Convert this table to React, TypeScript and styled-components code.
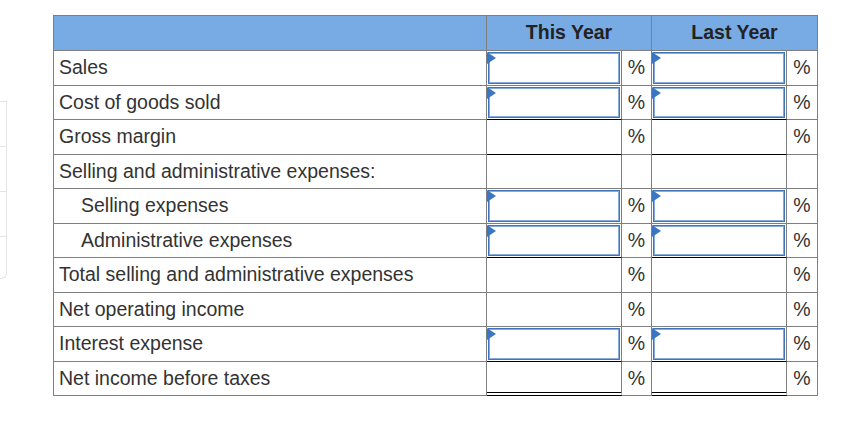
import styled, { createGlobalStyle } from "styled-components";

const GlobalStyle = createGlobalStyle`
  html, body {
    margin: 0;
    padding: 0;
    background: #ffffff;
  }
  body {
    font-family: "Liberation Sans", Arial, sans-serif;
  }
`;

type Underline = "none" | "single" | "double";

interface Row {
  label: string;
  indent?: boolean;
  input?: boolean;
  blank?: boolean;
  underline?: Underline;
}

const rows: Row[] = [
  { label: "Sales", input: true },
  { label: "Cost of goods sold", input: true, underline: "single" },
  { label: "Gross margin", underline: "single" },
  { label: "Selling and administrative expenses:", blank: true },
  { label: "Selling expenses", indent: true, input: true },
  { label: "Administrative expenses", indent: true, input: true, underline: "single" },
  { label: "Total selling and administrative expenses" },
  { label: "Net operating income" },
  { label: "Interest expense", input: true, underline: "single" },
  { label: "Net income before taxes", underline: "double" },
];

const Page = styled.div`
  display: flex;
  flex-flow: row nowrap;
  align-items: flex-start;
  padding-top: 15px;
  width: 867px;
  height: 428px;
`;

// the edge of a neighbouring panel that peeks in from the left
const PeekCard = styled.div`
  margin-top: 86px;
  width: 6px;
  display: flex;
  flex-flow: column nowrap;
  border: 1px solid #e4e4e4;
  border-left: none;
  border-bottom-right-radius: 6px;
`;

const PeekStrip = styled.div<{ $last?: boolean }>`
  height: ${({ $last }) => ($last ? "41px" : "44px")};
  border-bottom: ${({ $last }) => ($last ? "none" : "1px solid #e4e4e4")};
`;

const Grid = styled.div`
  margin-left: 46px;
  display: grid;
  grid-template-columns: 433px 135px 30px 135px 31px;
  grid-template-rows: 35px repeat(10, 34.5px);
  border-left: 1px solid #7f7f7f;
  border-top: 1px solid #7f7f7f;
`;

const HeadCell = styled.div<{ $span?: number }>`
  box-sizing: border-box;
  grid-column: span ${({ $span }) => $span ?? 1};
  background-color: #78abe4;
  border-right: 1px solid #7f7f7f;
  border-bottom: 1px solid #7f7f7f;
  display: flex;
  align-items: center;
  justify-content: center;
  padding-bottom: 1px;
  font-weight: 700;
  font-size: 19.5px;
  color: #222222;
`;

const LabelCell = styled.div<{ $indent?: boolean }>`
  box-sizing: border-box;
  border-right: 1px solid #7f7f7f;
  border-bottom: 1px solid #7f7f7f;
  display: flex;
  align-items: center;
  padding-left: ${({ $indent }) => ($indent ? "27px" : "5px")};
  font-size: 19.5px;
  color: #333333;
  white-space: nowrap;
`;

const AmountCell = styled.div<{ $underline: Underline }>`
  box-sizing: border-box;
  position: relative;
  border-right: 1px solid #7f7f7f;
  border-bottom: ${({ $underline }) =>
    $underline === "double"
      ? "4px double #000000"
      : $underline === "single"
      ? "1px solid #000000"
      : "1px solid #7f7f7f"};
  padding: 1px;
  display: flex;
`;

const AmountInput = styled.input`
  box-sizing: border-box;
  flex: 1;
  width: 100%;
  min-width: 0;
  margin: 0;
  border: 1px solid #3f74b8;
  box-shadow: inset 0 0 0 1px #86acdd;
  background: #ffffff;
  outline: none;
  font-family: "Liberation Sans", Arial, sans-serif;
  font-size: 16px;
  padding: 0 8px;
`;

// little blue flag in the corner of each entry field
const Flag = styled.span`
  display: block;
  position: absolute;
  left: 0;
  top: 1px;
  width: 0;
  height: 0;
  border-top: 6px solid transparent;
  border-bottom: 6px solid transparent;
  border-left: 9px solid #3a76c2;
  pointer-events: none;
`;

const PercentCell = styled.div`
  box-sizing: border-box;
  border-right: 1px solid #7f7f7f;
  border-bottom: 1px solid #7f7f7f;
  display: flex;
  align-items: center;
  justify-content: center;
  font-size: 19.5px;
  color: #333333;
`;

const EmptyCell = styled.div`
  box-sizing: border-box;
  border-right: 1px solid #7f7f7f;
  border-bottom: 1px solid #7f7f7f;
`;

const Amount = ({ row }: { row: Row }) => (
  <AmountCell $underline={row.underline ?? "none"}>
    {row.input && (
      <>
        <AmountInput type="text" aria-label={row.label} />
        <Flag />
      </>
    )}
  </AmountCell>
);

const App = () => {
  return (
    <>
      <GlobalStyle />
      <Page>
        <PeekCard>
          <PeekStrip />
          <PeekStrip />
          <PeekStrip />
          <PeekStrip $last />
        </PeekCard>
        <Grid>
          <HeadCell />
          <HeadCell $span={2}>This Year</HeadCell>
          <HeadCell $span={2}>Last Year</HeadCell>
          {rows.map((row) =>
            row.blank ? (
              <>
                <LabelCell key={row.label}>{row.label}</LabelCell>
                <EmptyCell />
                <EmptyCell />
                <EmptyCell />
                <EmptyCell />
              </>
            ) : (
              <>
                <LabelCell key={row.label} $indent={row.indent}>
                  {row.label}
                </LabelCell>
                <Amount row={row} />
                <PercentCell>%</PercentCell>
                <Amount row={row} />
                <PercentCell>%</PercentCell>
              </>
            )
          )}
        </Grid>
      </Page>
    </>
  );
};

export default App;
